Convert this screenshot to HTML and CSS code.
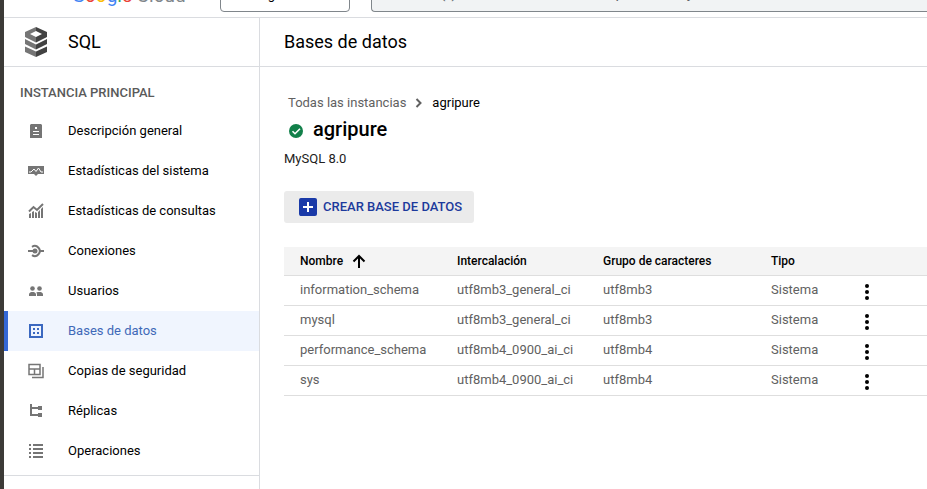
FILE: index.html
```html
<!DOCTYPE html>
<html lang="es">
<head>
<meta charset="utf-8">
<meta name="viewport" content="width=device-width, initial-scale=1">
<title>SQL – Bases de datos</title>
<link rel="stylesheet" href="styles.css">
</head>
<body>
<header class="topbar">
  <a class="brand" href="#"><span class="b">G</span><span class="r">o</span><span class="y">o</span><span class="b">g</span><span class="g">l</span><span class="r">e</span> Cloud</a>
  <button class="project" type="button">Blog</button>
  <input class="search" type="search" aria-label="Buscar" placeholder="Buscar (/) recursos, documentos, productos y más">
</header>
<div class="layout">
  <aside class="sidebar">
    <div class="product">
      <svg class="product-icon" width="24" height="32" viewBox="0 0 24 32" aria-hidden="true">
        <path fill="#757575" d="M1 6 12 1v4L6 8l6 3v5.500L1 11zM1 13l11 5.500v5L1 18zM1 20.500l11 5V31L1 26z"/>
        <path fill="#424242" d="M23 6 12 1v4l6 3-6 3v5.500L23 11zM23 13l-11 5.500v5L23 18zM23 20.500l-11 5V31l11-5z"/>
      </svg>
      <span>SQL</span>
    </div>
    <h2 class="section">INSTANCIA PRINCIPAL</h2>
    <nav class="nav">
      <a href="#"><svg viewBox="0 0 16 16"><path fill-rule="evenodd" d="M3 1h10l1 1v13H2V2zM7 4v2h2V4zM5 8v1h6V8zM5 11v1h6v-1z"/></svg>Descripción general</a>
      <a href="#"><svg viewBox="0 0 16 16"><path d="M0 3h16v8h-6l-2 2-2-2H0z"/><path class="cut" d="M1 9h2l3-3 2 2.500L10.500 5 13 9h2"/></svg>Estadísticas del sistema</a>
      <a href="#"><svg viewBox="0 0 16 16"><path d="M1 11l2-1v5H1zM4 9l2-1v7H4zM7 9l2 1v5H7zM10 9l2-2v8h-2zM13 6l2-2v11h-2z"/><path class="line" d="M1 8.500 5.500 4 9 7l6-6"/></svg>Estadísticas de consultas</a>
      <a href="#"><svg viewBox="0 0 16 16"><circle cx="7" cy="8" r="2.500"/><path class="line" d="M0 8h5M12.500 8H16M4 3.800a5 5 0 1 1 0 8.400"/></svg>Conexiones</a>
      <a href="#"><svg viewBox="0 0 16 16"><circle cx="4.500" cy="5.500" r="2.300"/><circle cx="11.500" cy="5.500" r="2.300"/><path d="M1 13v-1.500C1 9.500 3 9 4.500 9S8 9.500 8 11.500V13zM9 13v-1.500c0-1-.3-1.600-.8-2.100C9.200 9 10.500 9 11.500 9c1.500 0 3.500.5 3.500 2.500V13z"/></svg>Usuarios</a>
      <a href="#" class="active" aria-current="page"><svg viewBox="0 0 16 16"><path fill-rule="evenodd" d="M1 1h14v14H1zM3 3v10h10V3z"/><path d="M5 5h2v2H5zM9 5h2v2H9zM5 9h2v2H5zM9 9h2v2H9z"/></svg>Bases de datos</a>
      <a href="#"><svg viewBox="0 0 16 16"><path class="thin" d="M1 1.500h11v10H1zM1 6h11M6.500 6v5.500M15 4v10.500H4"/></svg>Copias de seguridad</a>
      <a href="#"><svg viewBox="0 0 16 16"><path d="M2 1h2v3h6V3h4v4h-4V6H4v5h6v-1h4v4h-4v-1H2z"/></svg>Réplicas</a>
      <a href="#"><svg viewBox="0 0 16 16"><path d="M1 1h2v2H1zM5 1h10v2H5zM1 5h2v2H1zM5 5h10v2H5zM1 9h2v2H1zM5 9h10v2H5zM1 13h2v2H1zM5 13h10v2H5z"/></svg>Operaciones</a>
    </nav>
  </aside>
  <main class="main">
    <h1 class="page-title">Bases de datos</h1>
    <div class="content">
      <nav class="crumbs" aria-label="Ruta">
        <a href="#">Todas las instancias</a>
        <svg width="8" height="10" viewBox="0 0 8 10" aria-hidden="true"><path d="M1.500 1l4 4-4 4" fill="none" stroke="#616161" stroke-width="2"/></svg>
        <span>agripure</span>
      </nav>
      <h2 class="instance">
        <svg width="16" height="16" viewBox="0 0 16 16" aria-hidden="true"><circle cx="8" cy="8" r="7" fill="#12804a"/><path d="M4.500 8.200 7 10.700l5-5" fill="none" stroke="#fff" stroke-width="1.600"/></svg>
        <span>agripure</span>
      </h2>
      <p class="version">MySQL 8.0</p>
      <button class="create" type="button">
        <svg width="18" height="18" viewBox="0 0 18 18" aria-hidden="true"><rect width="18" height="18" rx="2" fill="#1a3aa8"/><path d="M9 4v10M4 9h10" stroke="#fff" stroke-width="2"/></svg>
        CREAR BASE DE DATOS
      </button>
      <table class="databases">
        <colgroup><col class="c-name"><col class="c-coll"><col class="c-set"><col class="c-type"><col></colgroup>
        <thead>
          <tr>
            <th scope="col"><span class="sorted">Nombre <svg width="14" height="14" viewBox="0 0 14 14" aria-hidden="true"><path d="M7 14V2M1.500 7.500 7 2l5.500 5.500" fill="none" stroke="#000" stroke-width="2"/></svg></span></th>
            <th scope="col">Intercalación</th><th scope="col">Grupo de caracteres</th><th scope="col">Tipo</th><td></td>
          </tr>
        </thead>
        <tbody>
          <tr><td>information_schema</td><td>utf8mb3_general_ci</td><td>utf8mb3</td><td>Sistema</td><td><button class="more" type="button" aria-label="Acciones"><svg width="18" height="18" viewBox="0 0 18 18"><circle cx="9" cy="3" r="2"/><circle cx="9" cy="9" r="2"/><circle cx="9" cy="15" r="2"/></svg></button></td></tr>
          <tr><td>mysql</td><td>utf8mb3_general_ci</td><td>utf8mb3</td><td>Sistema</td><td><button class="more" type="button" aria-label="Acciones"><svg width="18" height="18" viewBox="0 0 18 18"><circle cx="9" cy="3" r="2"/><circle cx="9" cy="9" r="2"/><circle cx="9" cy="15" r="2"/></svg></button></td></tr>
          <tr><td>performance_schema</td><td>utf8mb4_0900_ai_ci</td><td>utf8mb4</td><td>Sistema</td><td><button class="more" type="button" aria-label="Acciones"><svg width="18" height="18" viewBox="0 0 18 18"><circle cx="9" cy="3" r="2"/><circle cx="9" cy="9" r="2"/><circle cx="9" cy="15" r="2"/></svg></button></td></tr>
          <tr><td>sys</td><td>utf8mb4_0900_ai_ci</td><td>utf8mb4</td><td>Sistema</td><td><button class="more" type="button" aria-label="Acciones"><svg width="18" height="18" viewBox="0 0 18 18"><circle cx="9" cy="3" r="2"/><circle cx="9" cy="9" r="2"/><circle cx="9" cy="15" r="2"/></svg></button></td></tr>
        </tbody>
      </table>
    </div>
  </main>
</div>
</body>
</html>
```
FILE: styles.css
```css
* { box-sizing: border-box; }
body {
  margin: 0;
  min-height: 100vh;
  display: flex;
  flex-direction: column;
  border-left: 4px solid #3c3a37;
  background: #fff;
  color: #000;
  font: 13px/20px Roboto, "Liberation Sans", sans-serif;
  overflow: hidden;
}
a { color: inherit; text-decoration: none; }
button, input { font: inherit; color: inherit; }

.topbar {
  height: 18px;
  display: flex;
  align-items: flex-end;
  padding-bottom: 5px;
  border-bottom: 1px solid #dadce0;
  overflow: hidden;
}
.brand {
  width: 216px;
  flex: none;
  padding: 0 0 4px 68px;
  font-size: 19px;
  line-height: 24px;
  color: #80868b;
  white-space: nowrap;
}
.b { color: #4285f4; }
.r { color: #ea4335; }
.y { color: #fbbc04; }
.g { color: #34a853; }
.project, .search {
  height: 34px;
  border: 1px solid #80868b;
  border-radius: 4px;
}
.project {
  width: 130px;
  flex: none;
  padding: 0 28px;
  background: #fff;
  text-align: left;
}
.search {
  flex: 1;
  min-width: 0;
  height: 38px;
  margin-left: 21px;
  padding: 0 18px;
  border-right: 0;
  border-radius: 4px 0 0 4px;
  background: #f1f3f4;
  font-size: 15px;
}
.search::placeholder { color: #5f6368; opacity: 1; }

.layout { flex: 1; display: flex; }
.sidebar { width: 256px; flex: none; border-right: 1px solid #dadce0; }
.product, .page-title {
  height: 49px;
  display: flex;
  align-items: center;
  border-bottom: 1px solid #dadce0;
  font-size: 18px;
  font-weight: 400;
}
.product { gap: 20px; padding-left: 20px; }
.section {
  margin: 0;
  padding: 16px 16px 8px;
  color: #5a5a5a;
  font-size: 13px;
  font-weight: 500;
}
.nav { padding-bottom: 4px; border-bottom: 1px solid #dadce0; }
.nav a {
  height: 40px;
  display: flex;
  align-items: center;
  gap: 24px;
  padding-left: 24px;
}
.nav svg { width: 16px; height: 16px; fill: #757575; stroke: none; }
.nav .line, .nav .thin { fill: none; stroke: #757575; stroke-width: 2; }
.nav .thin { stroke-width: 1.5; }
.nav .cut { fill: none; stroke: #fff; stroke-width: 1; }
.nav .active {
  padding-left: 20px;
  border-left: 4px solid #3367d6;
  background: #f0f5fe;
  color: #3f69b8;
}
.nav .active svg { fill: #3b68c0; }

.main { flex: 1; min-width: 0; }
.page-title { margin: 0; padding-left: 24px; }
.content { padding: 26px 0 0 24px; }
.crumbs { display: flex; align-items: center; gap: 9px; padding-left: 4px; }
.crumbs a { color: #616161; }
.instance {
  display: flex;
  align-items: center;
  gap: 9px;
  margin: 4px 0 0;
  padding-left: 4px;
  font-size: 20px;
  line-height: 24px;
  font-weight: 500;
}
.instance svg { margin-top: 4px; }
.version { margin: 8px 0 22px; color: #212121; }
.create {
  height: 32px;
  display: flex;
  align-items: center;
  gap: 6px;
  padding: 0 12px 0 15px;
  border: 0;
  border-radius: 3px;
  background: #ebebeb;
  color: #1c3a9c;
  font-weight: 500;
}
.databases {
  width: 100%;
  margin-top: 24px;
  border-collapse: separate;
  border-spacing: 0;
  table-layout: fixed;
}
.c-name { width: 157px; }
.c-coll { width: 146px; }
.c-set { width: 168px; }
.c-type { width: 87px; }
.databases th, .databases td {
  height: 30px;
  padding: 0 0 2px 16px;
  border-bottom: 1px solid #dedede;
  text-align: left;
  white-space: nowrap;
}
.databases tbody td { color: #616161; }
.databases thead th, .databases thead td {
  height: 29px;
  padding-bottom: 0;
  background: #f4f4f4;
  font-size: 12px;
  font-weight: 500;
}
.sorted { display: flex; align-items: center; gap: 9px; }
.more {
  display: block;
  margin-top: 4px;
  padding: 0;
  border: 0;
  background: none;
}
.more svg { display: block; }
```
